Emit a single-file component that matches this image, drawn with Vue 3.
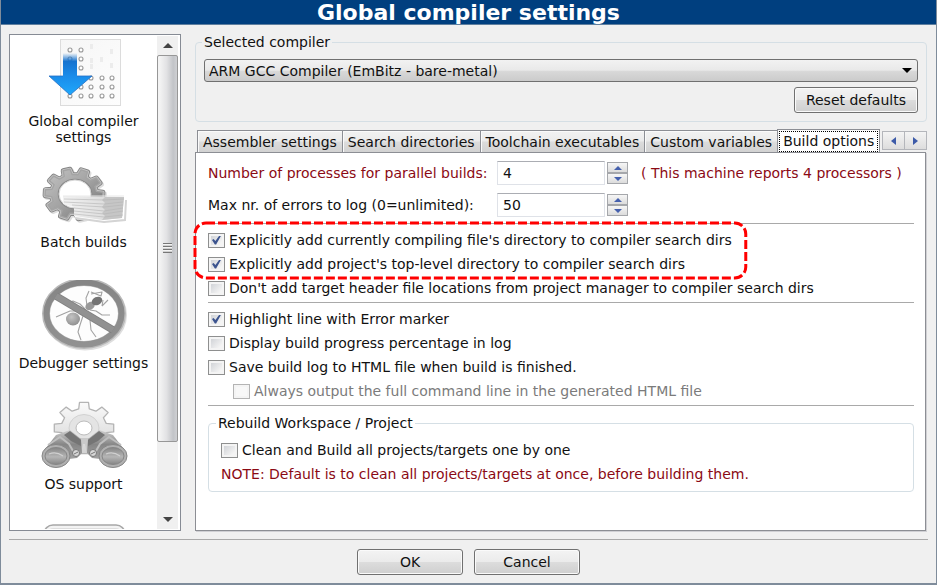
<script setup>
import { ref } from 'vue'

const categories = [
  { id: 'compiler', label: 'Global compiler settings' },
  { id: 'batch', label: 'Batch builds' },
  { id: 'debugger', label: 'Debugger settings' },
  { id: 'os', label: 'OS support' },
  { id: 'more', label: '' },
]

const tabs = ['Assembler settings', 'Search directories', 'Toolchain executables', 'Custom variables', 'Build options']
const activeTab = ref('Build options')

const processes = ref(4)
const maxErrors = ref(50)

const searchOptions = ref([
  { label: "Explicitly add currently compiling file's directory to compiler search dirs", on: true },
  { label: "Explicitly add project's top-level directory to compiler search dirs", on: true },
])
const skipHeaders = ref(false)
const logOptions = ref([
  { label: 'Highlight line with Error marker', on: true },
  { label: 'Display build progress percentage in log', on: false },
  { label: 'Save build log to HTML file when build is finished.', on: false },
])
const fullCommand = ref(false)
const cleanEach = ref(false)

// Outline of a cog: each tooth has a root, two shoulders and a root again.
function gear(cx, cy, rx, ry, teeth, inner, startDeg) {
  const step = 360 / teeth
  const points = []
  for (let i = 0; i < teeth; i++) {
    const mid = startDeg + i * step
    for (const [offset, scale] of [[-0.3, inner], [-0.19, 1], [0.19, 1], [0.3, inner]]) {
      const a = ((mid + offset * step) * Math.PI) / 180
      points.push(`${(cx + rx * scale * Math.cos(a)).toFixed(1)} ${(cy - ry * scale * Math.sin(a)).toFixed(1)}`)
    }
  }
  return `M${points.join('L')}Z`
}
const batchGear = gear(35, 35, 29, 25, 10, 0.78, 33)
const osGear = gear(45, 27, 30, 26, 8, 0.76, 90)

const dots = [
  [31, 12], [42, 12], [31, 21], [42, 21], [42, 30],
  [52, 40], [63, 40], [73, 40],
  [42, 49], [52, 49], [63, 49], [73, 49],
  [31, 58], [42, 58], [52, 58], [63, 58], [73, 58],
]
const faintDots = [[52, 8], [72, 13], [52, 22], [62, 21], [72, 27], [52, 28]]
</script>

<template>
  <div class="dialog">
    <h1 class="title">Global compiler settings</h1>

    <div class="body">
      <nav class="sidebar" aria-label="Categories">
        <ul class="categories">
          <li v-for="c in categories" :key="c.id" class="category">
            <svg v-if="c.id === 'compiler'" class="icon" viewBox="0 0 90 72" aria-hidden="true">
              <defs>
                <linearGradient id="arrowFade" x1="0" y1="0" x2="0" y2="1">
                  <stop offset="0" stop-color="#1673cf" stop-opacity="0" />
                  <stop offset="0.2" stop-color="#1673cf" />
                  <stop offset="0.55" stop-color="#1a8cea" />
                  <stop offset="1" stop-color="#1fa8fb" />
                </linearGradient>
                <linearGradient id="board" x1="0" y1="0" x2="1" y2="1">
                  <stop offset="0" stop-color="#f6f6f6" />
                  <stop offset="1" stop-color="#fdfdfd" />
                </linearGradient>
              </defs>
              <rect x="21.5" y="1.5" width="60" height="66" fill="url(#board)" stroke="#dcdcdc" />
              <rect v-for="(d, i) in faintDots" :key="'f' + i" :x="d[0] - 1" :y="d[1] - 2" width="3" height="5" fill="#ececec" />
              <circle v-for="(d, i) in dots" :key="i" :cx="d[0]" :cy="d[1]" r="2" fill="#fff" stroke="#999" stroke-width="1.1" />
              <path d="M24 15H38V38H53L31 57L10 38H24Z" fill="url(#arrowFade)" />
              <path d="M24 38H10L31 57L53 38H38" fill="none" stroke="#2670c4" stroke-width="0.8" />
            </svg>

            <svg v-else-if="c.id === 'batch'" class="icon" viewBox="0 0 90 72" aria-hidden="true">
              <defs>
                <linearGradient id="cog" x1="0" y1="0" x2="1" y2="1">
                  <stop offset="0" stop-color="#c4c4c4" />
                  <stop offset="0.5" stop-color="#a2a2a2" />
                  <stop offset="1" stop-color="#707070" />
                </linearGradient>
                <linearGradient id="paper" x1="0" y1="0" x2="1" y2="0">
                  <stop offset="0" stop-color="#f2f2f2" />
                  <stop offset="1" stop-color="#d4d4d4" />
                </linearGradient>
              </defs>
              <path :d="batchGear" transform="translate(1.5 1.5)" fill="none" stroke="#dedede" stroke-width="5" stroke-linejoin="round" />
              <path :d="batchGear" fill="url(#cog)" stroke="#858585" stroke-width="5" stroke-linejoin="round" />
              <path :d="batchGear" fill="url(#cog)" stroke="#c4c4c4" stroke-width="3.2" stroke-linejoin="round" />
              <path :d="batchGear" fill="url(#cog)" stroke="#a4a4a4" stroke-width="1.4" stroke-linejoin="round" />
              <ellipse cx="36" cy="35" rx="16" ry="14" fill="#fff" stroke="#8a8a8a" stroke-width="2.6" />
              <ellipse cx="36" cy="35" rx="16" ry="14" fill="#fff" stroke="#d6d6d6" stroke-width="1" />
              <path d="M35 50L53 50L66 40V63L36 60Z" fill="#fff" />
              <path d="M36 59L65 63L86 61L87 41" fill="none" stroke="#d4d4d4" stroke-width="2" />
              <path d="M24 37L85 38L83 59L63 61L35 57V48L24 45Z" fill="url(#paper)" />
              <path d="M66 38L85 38L83 59L63 61L66 57L63 54L66 51L63 48L66 44L63 41Z" fill="#c6c6c6" />
              <path d="M25 40L65 41L85 40M25 43L65 45L84 43M33 46L65 48L84 46M35 49L65 52L84 49M35 52L65 55L84 52M35 55L65 58L84 56" fill="none" stroke="#b4b4b4" stroke-width="0.6" />
              <path d="M24 37H85" stroke="#e8e8e8" />
            </svg>

            <svg v-else-if="c.id === 'debugger'" class="icon" viewBox="0 0 90 72" aria-hidden="true">
              <defs>
                <linearGradient id="ring" x1="0" y1="0" x2="0" y2="1">
                  <stop offset="0" stop-color="#858585" />
                  <stop offset="1" stop-color="#919191" />
                </linearGradient>
                <radialGradient id="belly" cx="0.4" cy="0.35" r="0.7">
                  <stop offset="0" stop-color="#c4c4c4" />
                  <stop offset="1" stop-color="#8d8d8d" />
                </radialGradient>
              </defs>
              <ellipse cx="46" cy="35" rx="38" ry="31.5" fill="none" stroke="#dedede" stroke-width="8" />
              <ellipse cx="45" cy="33.5" rx="38" ry="31.5" fill="#fdfdfd" stroke="#b9b9b9" stroke-width="8" />
              <ellipse cx="45" cy="33.5" rx="37.5" ry="31" fill="none" stroke="url(#ring)" stroke-width="6" />
              <g fill="none" stroke="#a3a3a3" stroke-width="1.1" stroke-linejoin="round">
                <path d="M17 37L24 34L31 31L38 31" />
                <path d="M28 24L34 21L41 24L46 29" />
                <path d="M42 60L39 52L41 45L45 33" />
                <path d="M57 57L52 50L51 40L49 33" />
                <path d="M71 35L63 35L57 31L51 30" />
                <path d="M48 26L47 18L50 11" />
                <path d="M52 12L62 16L63 12L52 14M63 26L69 20M64 20L63 26" />
              </g>
              <ellipse cx="34" cy="39" rx="7" ry="6.5" fill="url(#belly)" />
              <ellipse cx="44" cy="32" rx="4" ry="3.5" fill="#9a9a9a" />
              <ellipse cx="51" cy="26" rx="5" ry="3.8" fill="#999" transform="rotate(-35 51 26)" />
              <ellipse cx="58" cy="21" rx="5.5" ry="4" fill="#747474" transform="rotate(-25 58 21)" />
              <path d="M17 16L74 50" stroke="#808080" stroke-width="7.5" />
              <path d="M17 16L74 50" stroke="#919191" stroke-width="6" />
            </svg>

            <svg v-else-if="c.id === 'os'" class="icon" viewBox="0 0 90 72" aria-hidden="true">
              <defs>
                <linearGradient id="paleCog" x1="0" y1="0" x2="0" y2="1">
                  <stop offset="0" stop-color="#fafafa" />
                  <stop offset="1" stop-color="#d2d2d2" />
                </linearGradient>
                <linearGradient id="barrel" x1="0" y1="0" x2="0" y2="1">
                  <stop offset="0" stop-color="#cfcfcf" />
                  <stop offset="0.5" stop-color="#868686" />
                  <stop offset="1" stop-color="#a2a2a2" />
                </linearGradient>
                <linearGradient id="lens" x1="0" y1="0" x2="0" y2="1">
                  <stop offset="0" stop-color="#858585" />
                  <stop offset="0.55" stop-color="#b5b5b5" />
                  <stop offset="1" stop-color="#858585" />
                </linearGradient>
              </defs>
              <path :d="osGear" fill="url(#paleCog)" stroke="#b4b4b4" stroke-width="1.3" stroke-linejoin="round" />
              <ellipse cx="45" cy="27" rx="15" ry="13.5" fill="#e4e4e4" stroke="#ccc" stroke-width="0.8" />
              <ellipse cx="45" cy="27" rx="8" ry="7" fill="#fff" stroke="#bbb" />
              <path d="M40 37H50L53 53H48L46 43H44L42 53H37Z" fill="#c9c9c9" />
              <path d="M4 51L17 34L31 29L42 38L43 52L38 57L30 58Z" fill="url(#barrel)" />
              <path d="M87 51L74 34L60 29L49 38L48 52L53 57L61 58Z" fill="url(#barrel)" />
              <path d="M25 34L31 30L42 39L42 45L32 40Z" fill="#757575" />
              <path d="M66 34L60 30L49 39L49 45L59 40Z" fill="#757575" />
              <path d="M9 44L21 36L30 43L34 50" fill="none" stroke="#bfbfbf" stroke-width="2" />
              <path d="M82 44L70 36L61 43L57 50" fill="none" stroke="#bfbfbf" stroke-width="2" />
              <g stroke="#868686">
                <ellipse cx="17" cy="55" rx="14" ry="11.5" fill="#b0b0b0" />
                <ellipse cx="74" cy="55" rx="14" ry="11.5" fill="#b0b0b0" />
                <ellipse cx="17" cy="55" rx="11" ry="8.5" fill="url(#lens)" />
                <ellipse cx="74" cy="55" rx="11" ry="8.5" fill="url(#lens)" />
              </g>
              <path d="M10 53Q17 50 24 55M67 53Q74 50 81 55" fill="none" stroke="#d0d0d0" stroke-width="1.2" />
              <circle cx="37" cy="52" r="3.5" fill="#d8d8d8" stroke="#777" />
              <circle cx="54" cy="52" r="3.5" fill="#d8d8d8" stroke="#777" />
              <path d="M35 53L39 51M52 53L56 51" stroke="#777" />
            </svg>

            <svg v-else class="icon" viewBox="0 0 90 72" aria-hidden="true">
              <rect x="5" y="3" width="81" height="60" rx="9" fill="#f3f3f3" stroke="#a8a8a8" stroke-width="1.5" />
              <rect x="8" y="6" width="75" height="54" rx="6" fill="#dedede" />
            </svg>
            <a v-if="c.label" href="#" class="category-label">{{ c.label }}</a>
          </li>
        </ul>
        <div class="scrollbar">
          <button type="button" class="scroll-step" aria-label="Scroll up">
            <svg viewBox="0 0 10 5" class="scroll-arrow"><path d="M0 5L5 0L10 5Z" fill="#444" /></svg>
          </button>
          <div class="track">
            <div class="thumb"><span class="grip"></span></div>
          </div>
          <button type="button" class="scroll-step" aria-label="Scroll down">
            <svg viewBox="0 0 10 5" class="scroll-arrow"><path d="M0 0H10L5 5Z" fill="#444" /></svg>
          </button>
        </div>
      </nav>

      <main class="content">
        <fieldset class="group compiler-group">
          <legend><label for="compiler">Selected compiler</label></legend>
          <div class="select-wrap">
            <select id="compiler" class="select">
              <option>ARM GCC Compiler (EmBitz - bare-metal)</option>
            </select>
            <svg class="select-arrow" viewBox="0 0 10 5" aria-hidden="true"><path d="M0 0H10L5 5Z" fill="#000" /></svg>
          </div>
          <button type="button" class="button reset">Reset defaults</button>
        </fieldset>

        <div class="tabs" role="tablist">
          <button
            v-for="t in tabs"
            :key="t"
            type="button"
            role="tab"
            class="tab"
            :class="{ active: t === activeTab }"
            :aria-selected="t === activeTab"
            @click="activeTab = t"
          ><span class="tab-text">{{ t }}</span></button>
          <div class="tab-scroll">
            <button type="button" class="tab-step" aria-label="Previous tab">
              <svg viewBox="0 0 5 8"><path d="M5 0V8L0 4Z" fill="#3c5aa8" /></svg>
            </button>
            <button type="button" class="tab-step" aria-label="Next tab">
              <svg viewBox="0 0 5 8"><path d="M0 0V8L5 4Z" fill="#3c5aa8" /></svg>
            </button>
          </div>
        </div>

        <section class="panel" role="tabpanel">
          <div class="numbers">
            <label for="processes" class="note">Number of processes for parallel builds:</label>
            <div class="spin">
              <input id="processes" v-model="processes" type="text" inputmode="numeric" class="number" />
              <div class="steps">
                <button type="button" class="step" aria-label="More processes" @click="processes++">
                  <svg viewBox="0 0 8 4"><path d="M0 4L4 0L8 4Z" fill="#4560ad" /></svg>
                </button>
                <button type="button" class="step" aria-label="Fewer processes" @click="processes--">
                  <svg viewBox="0 0 8 4"><path d="M0 0H8L4 4Z" fill="#4560ad" /></svg>
                </button>
              </div>
            </div>
            <span class="note">( This machine reports 4 processors )</span>

            <label for="errors">Max nr. of errors to log (0=unlimited):</label>
            <div class="spin">
              <input id="errors" v-model="maxErrors" type="text" inputmode="numeric" class="number" />
              <div class="steps">
                <button type="button" class="step" aria-label="More errors" @click="maxErrors++">
                  <svg viewBox="0 0 8 4"><path d="M0 4L4 0L8 4Z" fill="#4560ad" /></svg>
                </button>
                <button type="button" class="step" aria-label="Fewer errors" @click="maxErrors--">
                  <svg viewBox="0 0 8 4"><path d="M0 0H8L4 4Z" fill="#4560ad" /></svg>
                </button>
              </div>
            </div>
          </div>

          <hr class="rule" />

          <div class="checks">
            <div class="highlighted">
              <label v-for="o in searchOptions" :key="o.label" class="check">
                <input v-model="o.on" type="checkbox" class="box" />{{ o.label }}
              </label>
              <svg class="marker" aria-hidden="true"><rect class="marker-line" /></svg>
            </div>
            <label class="check">
              <input v-model="skipHeaders" type="checkbox" class="box" />Don't add target header file locations from project manager to compiler search dirs
            </label>
          </div>

          <hr class="rule" />

          <div class="checks">
            <label v-for="o in logOptions" :key="o.label" class="check">
              <input v-model="o.on" type="checkbox" class="box" />{{ o.label }}
            </label>
            <label class="check nested">
              <input v-model="fullCommand" type="checkbox" class="box" disabled />Always output the full command line in the generated HTML file
            </label>
          </div>

          <hr class="rule" />

          <fieldset class="group rebuild-group">
            <legend>Rebuild Workspace / Project</legend>
            <label class="check">
              <input v-model="cleanEach" type="checkbox" class="box" />Clean and Build all projects/targets one by one
            </label>
            <p class="note">NOTE: Default is to clean all projects/targets at once, before building them.</p>
          </fieldset>
        </section>
      </main>
    </div>

    <footer class="footer">
      <button type="button" class="button wide">OK</button>
      <button type="button" class="button wide">Cancel</button>
    </footer>
  </div>
</template>

<style>
body {
  margin: 0;
  background: #cfe0ec;
}
</style>

<style scoped>
* {
  box-sizing: border-box;
}
.dialog {
  display: flex;
  flex-direction: column;
  height: 100vh;
  min-height: 560px;
  background: #f0f0f0;
  border: 1px solid #7f8c9b;
  border-width: 0 1px 2px;
  color: #111;
  font: 14px/16px "DejaVu Sans", Verdana, sans-serif;
}
button,
input,
select {
  margin: 0;
  padding: 0;
  color: inherit;
  font: inherit;
}
svg {
  display: block;
}
.title {
  margin: 0;
  height: 25px;
  background: #003f7f;
  border-bottom: 1px solid #5f7f9f;
  color: #fff;
  font-size: 22px;
  font-weight: bold;
  line-height: 26px;
  text-align: center;
}
.body {
  display: flex;
  flex: 1;
  gap: 14px;
  min-height: 0;
  padding: 9px 9px 8px 8px;
}

/* Category list */
.sidebar {
  display: flex;
  flex: none;
  width: 172px;
  padding: 1px 2px 1px 0;
  background: #fff;
  border: 1px solid #868b94;
}
.categories {
  flex: 1;
  margin: 0;
  padding: 2px 0 0;
  overflow: hidden;
  list-style: none;
}
.category {
  display: flex;
  flex-direction: column;
  align-items: center;
  gap: 3px;
  height: 121px;
}
.icon {
  flex: none;
  width: 90px;
  height: 72px;
}
.category-label {
  max-width: 132px;
  color: inherit;
  text-align: center;
  text-decoration: none;
}
.scrollbar {
  display: flex;
  flex-direction: column;
  width: 21px;
  background: #f0f0f0;
}
.scroll-step {
  display: flex;
  align-items: center;
  justify-content: center;
  height: 19px;
  background: none;
  border: 0;
}
.scroll-arrow {
  width: 10px;
  height: 5px;
}
.track {
  flex: 1;
}
.thumb {
  display: flex;
  align-items: center;
  justify-content: center;
  height: 85%;
  background: linear-gradient(90deg, #f3f3f3 10%, #e2e2e4 45%, #c2c4c8 80%, #cfd0d3);
  border: 1px solid #979797;
  border-radius: 2px;
}
.grip {
  width: 9px;
  height: 10px;
  background: repeating-linear-gradient(#777 0 1px, #f4f4f4 1px 2px, #d0d0d0 2px 3px);
}

/* Groups */
.content {
  display: flex;
  flex: 1;
  flex-direction: column;
  min-width: 0;
}
.group {
  min-width: 0;
  margin: 0;
  border: 1px solid #d5dfe5;
  border-radius: 4px;
}
.group legend {
  padding: 0 2px;
}
.compiler-group {
  display: flex;
  flex-direction: column;
  gap: 5px;
  padding: 9px 8px 8px;
}
.compiler-group legend {
  margin-left: -2px;
}
.select-wrap {
  position: relative;
}
.select {
  display: block;
  width: 100%;
  height: 23px;
  padding: 0 24px 0 4px;
  appearance: none;
  background: linear-gradient(#f2f2f2, #e9e9e9 48%, #d8d8d8 55%, #cbcbcb);
  border: 1px solid #707070;
  border-radius: 3px;
}
.select-arrow {
  position: absolute;
  top: 9px;
  right: 6px;
  width: 10px;
  height: 5px;
  pointer-events: none;
}
.button {
  height: 26px;
  padding: 0 11px;
  background: linear-gradient(#f3f3f3, #ebebeb 48%, #dcdcdc 52%, #cfcfcf);
  border: 1px solid #707070;
  border-radius: 3px;
  box-shadow: inset 0 0 0 1px #fafafa;
}
.reset {
  align-self: flex-end;
}

/* Tabs */
.tabs {
  display: flex;
  align-items: flex-end;
  margin-top: 7px;
  padding-left: 2px;
}
.tab {
  height: 22px;
  padding: 1px 5px 0;
  background: linear-gradient(#f2f2f2, #ebebeb 48%, #dcdcdc 52%, #d2d2d2);
  border: 1px solid #8c8e94;
  border-right-width: 0;
  border-bottom-width: 0;
  box-shadow: inset 1px 1px 0 #fafafa;
  white-space: nowrap;
}
.tab.active {
  height: 24px;
  margin-bottom: -1px;
  padding: 0 1px 1px;
  background: #fff;
  border-right-width: 1px;
}
.tab-text {
  display: block;
}
.active .tab-text {
  padding: 1px 3px 2px;
  border: 1px dotted #000;
}
.tab-scroll {
  display: flex;
  align-self: center;
  margin-left: auto;
}
.tab-step {
  display: flex;
  align-items: center;
  justify-content: center;
  width: 23px;
  height: 19px;
  background: linear-gradient(#f4f4f4, #ddd);
  border: 1px solid #b4b6bb;
}
.tab-step + .tab-step {
  margin-left: -1px;
}
.tab-step svg {
  width: 5px;
  height: 8px;
}

/* Tab page */
.panel {
  flex: 1;
  min-height: 0;
  margin-right: 1px;
  padding: 8px 11px 0 12px;
  background: #fff;
  border: 1px solid #8c8e94;
  box-shadow: 1px 1px 0 #d0d0d4;
}
.numbers {
  display: grid;
  grid-template-columns: 276px max-content 1fr;
  align-items: center;
  gap: 8px 13px;
  padding-bottom: 4px;
  white-space: nowrap;
}
.note {
  margin: 0;
  color: #8b0a14;
}
.spin {
  display: flex;
  align-items: center;
  gap: 2px;
}
.number {
  width: 108px;
  height: 24px;
  padding: 0 5px;
  background: #fff;
  border: 1px solid #dfe2e8;
  border-top-color: #abadb3;
}
.steps {
  display: flex;
  flex-direction: column;
  width: 21px;
}
.step {
  display: flex;
  align-items: center;
  justify-content: center;
  height: 11px;
  background: linear-gradient(#f6f6f6, #dcdcdc);
  border: 1px solid #a5a7ab;
}
.step svg {
  width: 8px;
  height: 4px;
}
.rule {
  height: 1px;
  margin: 2px 0 4px;
  background: #a9a9a9;
  border: 0;
}
.checks {
  display: flex;
  flex-direction: column;
  align-items: flex-start;
}
.check {
  display: flex;
  align-items: center;
  gap: 4px;
  line-height: 24px;
  white-space: nowrap;
}
.nested {
  margin-left: 25px;
  color: #7b7b7b;
}
.box {
  position: relative;
  flex: none;
  width: 17px;
  height: 15px;
  appearance: none;
  background: linear-gradient(135deg, #c9ccd1, #f4f4f4 75%);
  border: 1px solid #8e8f8f;
  box-shadow: inset 0 0 0 2px #f4f4f4;
}
.box:checked::after {
  position: absolute;
  inset: 2px 3px;
  background: #3c548f;
  clip-path: polygon(0 50%, 18% 38%, 38% 62%, 82% 0, 100% 4%, 46% 100%, 32% 100%);
  content: "";
}
.box:disabled {
  background: #f8f8f8;
  border-color: #b4b4b4;
}
.highlighted {
  position: relative;
}
.marker {
  position: absolute;
  top: -7px;
  left: -15px;
  width: calc(100% + 31px);
  height: calc(100% + 11px);
  overflow: visible;
  pointer-events: none;
}
.marker-line {
  x: 2px;
  y: 2px;
  width: calc(100% - 4px);
  height: calc(100% - 4px);
  rx: 11px;
  fill: none;
  stroke: #f00;
  stroke-width: 3px;
  stroke-dasharray: 9 3;
}
.rebuild-group {
  margin-top: 9px;
  padding: 7px 12px 5px;
}
.rebuild-group legend {
  margin-left: -5px;
}
.rebuild-group .note {
  line-height: 24px;
}

/* Footer */
.footer {
  display: flex;
  justify-content: center;
  gap: 11px;
  margin: 0 8px;
  padding: 9px 0 8px;
  border-top: 1px solid #a9a9a9;
}
.wide {
  width: 106px;
}
</style>
